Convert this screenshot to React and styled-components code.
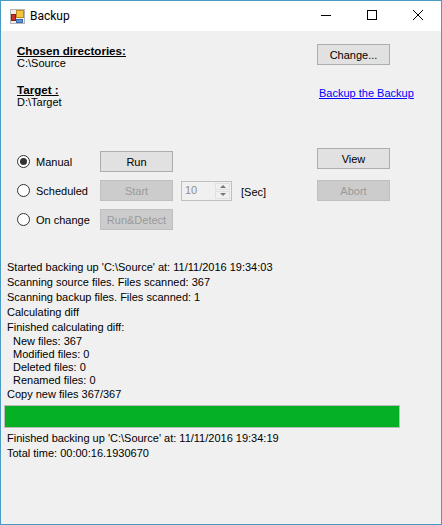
import styled, { createGlobalStyle } from "styled-components";

const GlobalStyle = createGlobalStyle`
  html, body { margin: 0; padding: 0; background: #f0f0f0; }
  * { box-sizing: border-box; }
`;

const Window = styled.div`
  width: 442px;
  height: 525px;
  border: 1px solid #4a9ac4;
  background: #f0f0f0;
  display: flex;
  flex-direction: column;
  overflow: hidden;
  font-family: "Liberation Sans", Arial, sans-serif;
  font-size: 11px;
  color: #000;
`;

const TitleBar = styled.div`
  height: 30px;
  flex: none;
  background: #fff;
  display: flex;
  align-items: center;
  padding-left: 9px;
`;

const AppTitle = styled.span`
  font-family: Roboto, sans-serif;
  font-size: 12px;
  margin-left: 5px;
  flex: 1;
`;

const WindowButton = styled.div`
  width: 46px;
  height: 30px;
  padding-bottom: 2px;
  display: flex;
  align-items: center;
  justify-content: center;
`;

const Client = styled.div`
  flex: 1;
  display: flex;
  flex-direction: column;
  padding: 12px 0 0 16px;
`;

const TopRow = styled.div`
  display: flex;
  height: 105px;
`;

const Directories = styled.div`
  width: 300px;
  padding-top: 1px;
`;

const DirLabel = styled.div`
  font-weight: 700;
  font-size: 11.6px;
  line-height: 13px;
  text-decoration: underline;
`;

const DirValue = styled.div`
  line-height: 13px;
  margin-bottom: 13px;
`;

const TopActions = styled.div`
  display: flex;
  flex-direction: column;
  align-items: flex-start;
  gap: 21px;
  padding-top: 1px;
`;

const BackupLink = styled.a`
  color: #0000ff;
  text-decoration: underline;
  line-height: 14px;
  margin-left: 2px;
  white-space: nowrap;
`;

const Button = styled.div`
  width: 73px;
  height: 21px;
  flex: none;
  display: flex;
  align-items: center;
  justify-content: center;
  border: 1px solid ${(p) => (p.$disabled ? "#bfbfbf" : "#adadad")};
  background: ${(p) => (p.$disabled ? "#cccccc" : "#e1e1e1")};
  color: ${(p) => (p.$disabled ? "#9a9a9a" : "#000")};
  white-space: nowrap;
`;

const ControlsRow = styled.div`
  display: flex;
`;

const ModeList = styled.div`
  width: 300px;
  padding-top: 3px;
  display: flex;
  flex-direction: column;
  gap: 8px;
`;

const ModeRow = styled.div`
  display: flex;
  align-items: center;
  height: 21px;
`;

const RadioLabel = styled.label`
  width: 83px;
  flex: none;
  display: flex;
  align-items: center;
  gap: 6px;
  white-space: nowrap;
`;

const RadioDot = styled.span`
  width: 13px;
  height: 13px;
  flex: none;
  border-radius: 50%;
  border: 1px solid #333;
  background: #fff;
  display: flex;
  align-items: center;
  justify-content: center;

  &::after {
    content: "";
    width: 7px;
    height: 7px;
    border-radius: 50%;
    background: ${(p) => (p.$checked ? "#333" : "transparent")};
  }
`;

const Spinner = styled.div`
  width: 51px;
  height: 20px;
  margin-left: 8px;
  border: 1px solid #bfbfbf;
  background: #f0f0f0;
  display: flex;
  justify-content: space-between;
  padding: 1px;
  color: #8d8d8d;
`;

const SpinnerValue = styled.span`
  padding-left: 2px;
  line-height: 15px;
`;

const SpinnerArrows = styled.div`
  width: 15px;
  display: flex;
  flex-direction: column;
  gap: 1px;
`;

const SpinnerArrow = styled.div`
  flex: 1;
  background: #f0f0f0;
  border: 1px solid #e0e0e0;
  display: flex;
  align-items: center;
  justify-content: center;

  &::after {
    content: "";
    border-left: 3px solid transparent;
    border-right: 3px solid transparent;
    ${(p) => (p.$down ? "border-top: 3px solid #777;" : "border-bottom: 3px solid #777;")}
  }
`;

const Unit = styled.span`
  margin-left: 9px;
  margin-top: 3px;
`;

const SideActions = styled.div`
  display: flex;
  flex-direction: column;
  gap: 11px;
`;

const Log = styled.div`
  margin-top: 30px;
  margin-left: -10px;
`;

const LogLine = styled.div`
  height: ${(p) => (p.$indent ? "13px" : "15px")};
  line-height: ${(p) => (p.$indent ? "13px" : "15px")};
  padding-left: ${(p) => (p.$indent ? "6px" : "0")};
  white-space: pre;
`;

const ProgressTrack = styled.div`
  width: 396px;
  height: 23px;
  margin: 3px 0 3px -3px;
  border: 1px solid #bcbcbc;
  background: #e6e6e6;
`;

const ProgressFill = styled.div`
  height: 100%;
  background: #06b025;
`;

const scanLines = [
  "Started backing up 'C:\\Source' at: 11/11/2016 19:34:03",
  "Scanning source files. Files scanned: 367",
  "Scanning backup files. Files scanned: 1",
  "Calculating diff",
  "Finished calculating diff:",
];

const diffLines = ["New files: 367", "Modified files: 0", "Deleted files: 0", "Renamed files: 0"];

function AppIcon() {
  return (
    <svg width="15" height="15" viewBox="0 0 15 15">
      <rect x="0.5" y="0.5" width="14" height="14" fill="#ececec" stroke="#b5b5b5" />
      <rect x="6.5" y="1.5" width="7" height="7" fill="#f5c242" stroke="#c08a1a" />
      <rect x="1.5" y="5.5" width="4" height="6" fill="#c8322c" stroke="#8a1f1a" />
      <rect x="6.5" y="10.5" width="6" height="3" fill="#5b93d8" stroke="#3a6aa8" />
    </svg>
  );
}

function MinimizeIcon() {
  return (
    <svg width="10" height="10" viewBox="0 0 10 10">
      <path d="M0 5.5H10" stroke="#000" fill="none" />
    </svg>
  );
}

function MaximizeIcon() {
  return (
    <svg width="10" height="10" viewBox="0 0 10 10">
      <rect x="0.5" y="0.5" width="9" height="9" stroke="#000" fill="none" />
    </svg>
  );
}

function CloseIcon() {
  return (
    <svg width="10" height="10" viewBox="0 0 10 10">
      <path d="M0 0L10 10M10 0L0 10" stroke="#000" fill="none" />
    </svg>
  );
}

export default function App() {
  return (
    <Window>
      <GlobalStyle />
      <TitleBar>
        <AppIcon />
        <AppTitle>Backup</AppTitle>
        <WindowButton><MinimizeIcon /></WindowButton>
        <WindowButton><MaximizeIcon /></WindowButton>
        <WindowButton><CloseIcon /></WindowButton>
      </TitleBar>

      <Client>
        <TopRow>
          <Directories>
            <DirLabel>Chosen directories:</DirLabel>
            <DirValue>C:\Source</DirValue>
            <DirLabel>Target :</DirLabel>
            <DirValue>D:\Target</DirValue>
          </Directories>
          <TopActions>
            <Button>Change...</Button>
            <BackupLink href="#">Backup the Backup</BackupLink>
          </TopActions>
        </TopRow>

        <ControlsRow>
          <ModeList>
            <ModeRow>
              <RadioLabel><RadioDot $checked />Manual</RadioLabel>
              <Button>Run</Button>
            </ModeRow>
            <ModeRow>
              <RadioLabel><RadioDot />Scheduled</RadioLabel>
              <Button $disabled>Start</Button>
              <Spinner>
                <SpinnerValue>10</SpinnerValue>
                <SpinnerArrows>
                  <SpinnerArrow />
                  <SpinnerArrow $down />
                </SpinnerArrows>
              </Spinner>
              <Unit>[Sec]</Unit>
            </ModeRow>
            <ModeRow>
              <RadioLabel><RadioDot />On change</RadioLabel>
              <Button $disabled>Run&amp;Detect</Button>
            </ModeRow>
          </ModeList>
          <SideActions>
            <Button>View</Button>
            <Button $disabled>Abort</Button>
          </SideActions>
        </ControlsRow>

        <Log>
          {scanLines.map((line) => (
            <LogLine key={line}>{line}</LogLine>
          ))}
          {diffLines.map((line) => (
            <LogLine key={line} $indent>{line}</LogLine>
          ))}
          <LogLine>Copy new files 367/367</LogLine>
          <ProgressTrack>
            <ProgressFill style={{ width: `${(367 / 367) * 100}%` }} />
          </ProgressTrack>
          <LogLine>Finished backing up 'C:\Source' at: 11/11/2016 19:34:19</LogLine>
          <LogLine>Total time: 00:00:16.1930670</LogLine>
        </Log>
      </Client>
    </Window>
  );
}
